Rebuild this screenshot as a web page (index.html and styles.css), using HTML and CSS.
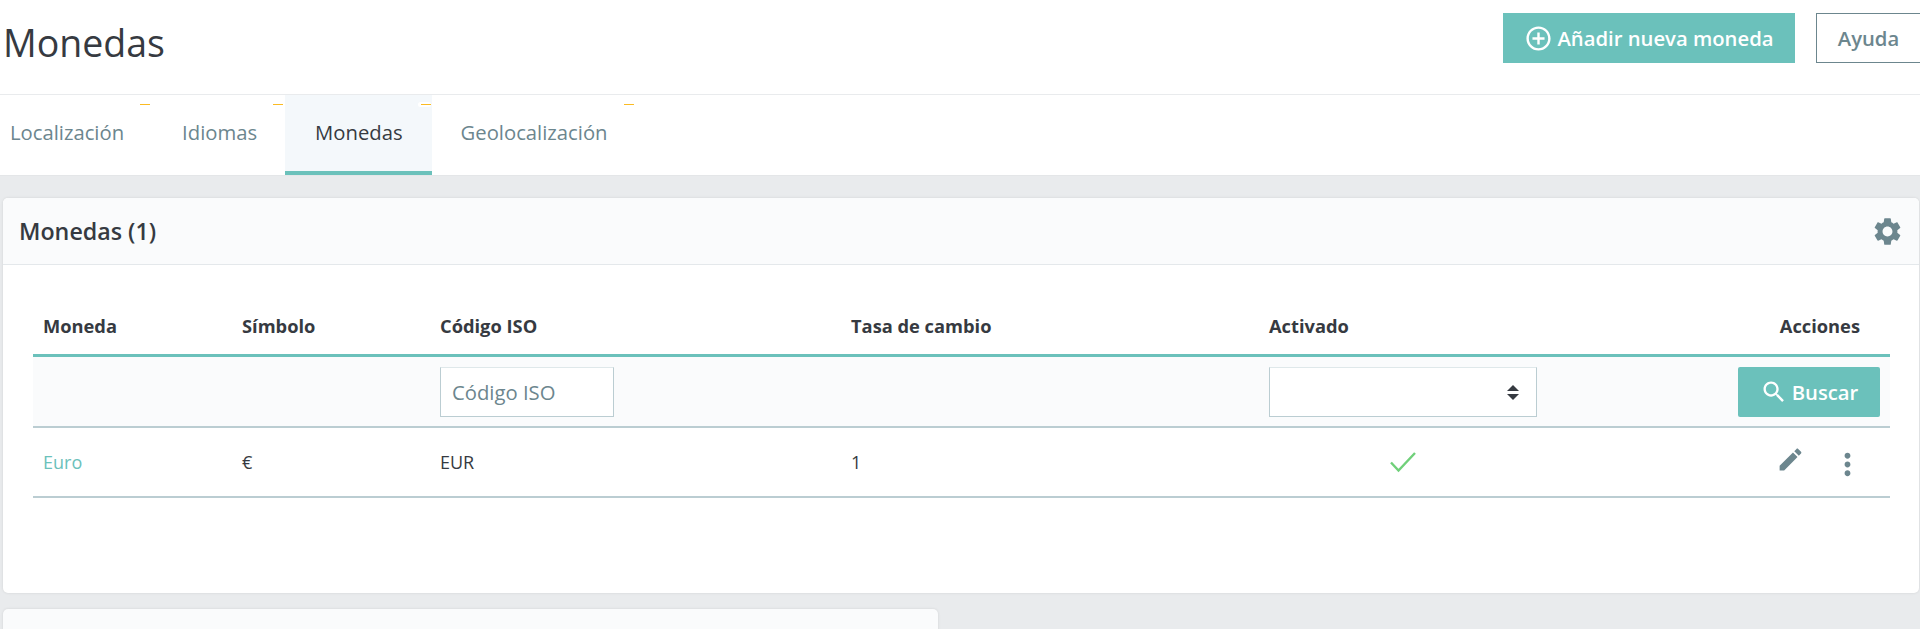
FILE: index.html
```html
<!doctype html>
<html lang="es">
<head>
<meta charset="utf-8">
<meta name="viewport" content="width=device-width, initial-scale=1">
<title>Monedas</title>
<link rel="stylesheet" href="styles.css">
</head>
<body>
<header class="page-head">
  <h1>Monedas</h1>
  <div class="toolbar">
    <a class="btn btn-primary btn-add" href="#">
      <svg class="ico-add" viewBox="0 0 24 24"><path d="M13 7h-2v4H7v2h4v4h2v-4h4v-2h-4V7zm-1-5C6.48 2 2 6.48 2 12s4.48 10 10 10 10-4.48 10-10S17.52 2 12 2zm0 18c-4.41 0-8-3.59-8-8s3.59-8 8-8 8 3.59 8 8-3.59 8-8 8z"/></svg>
      Añadir nueva moneda
    </a>
    <a class="btn btn-help" href="#">Ayuda</a>
  </div>
</header>

<nav class="tabs">
  <a class="tab" href="#">Localización<span class="dash"></span></a>
  <a class="tab" href="#">Idiomas<span class="dash"></span></a>
  <a class="tab active" href="#">Monedas<span class="dash"></span></a>
  <a class="tab" href="#">Geolocalización<span class="dash"></span></a>
</nav>

<main class="content">
  <section class="card">
    <div class="card-head">
      <h2>Monedas (1)</h2>
      <svg class="ico-gear" viewBox="0 0 24 24"><path d="M19.14 12.94c.04-.3.06-.61.06-.94 0-.32-.02-.64-.07-.94l2.03-1.58c.18-.14.23-.41.12-.61l-1.92-3.32c-.12-.22-.37-.29-.59-.22l-2.39.96c-.5-.38-1.03-.7-1.62-.94l-.36-2.54c-.04-.24-.24-.41-.48-.41h-3.84c-.24 0-.43.17-.47.41l-.36 2.54c-.59.24-1.13.57-1.62.94l-2.39-.96c-.22-.08-.47 0-.59.22L2.74 8.87c-.12.21-.08.47.12.61l2.03 1.58c-.05.3-.09.63-.09.94s.02.64.07.94l-2.03 1.58c-.18.14-.23.41-.12.61l1.92 3.32c.12.22.37.29.59.22l2.39-.96c.5.38 1.03.7 1.62.94l.36 2.54c.05.24.24.41.48.41h3.84c.24 0 .44-.17.47-.41l.36-2.54c.59-.24 1.13-.56 1.62-.94l2.39.96c.22.08.47 0 .59-.22l1.92-3.32c.12-.22.07-.47-.12-.61l-2.01-1.58zM12 15.6c-1.98 0-3.6-1.62-3.6-3.6s1.62-3.6 3.6-3.6 3.6 1.62 3.6 3.6-1.62 3.6-3.6 3.6z"/></svg>
    </div>
    <div class="card-body">
      <table class="grid-table">
        <colgroup>
          <col class="col-name"><col class="col-symbol"><col class="col-iso"><col class="col-rate"><col>
        </colgroup>
        <thead>
          <tr class="titles">
            <th>Moneda</th>
            <th>Símbolo</th>
            <th>Código ISO</th>
            <th>Tasa de cambio</th>
            <th>
              <div class="th-split"><span>Activado</span><span class="th-actions">Acciones</span></div>
            </th>
          </tr>
          <tr class="filters">
            <td></td>
            <td></td>
            <td><input class="field field-iso" type="text" placeholder="Código ISO"></td>
            <td></td>
            <td>
              <div class="filter-split">
                <div class="field field-select"><span class="updown"></span></div>
                <a class="btn btn-primary btn-search" href="#">
                  <svg class="ico-search" viewBox="0 0 24 24"><path d="M15.5 14h-.79l-.28-.27C15.41 12.59 16 11.11 16 9.5 16 5.91 13.09 3 9.5 3S3 5.91 3 9.5 5.91 16 9.5 16c1.61 0 3.09-.59 4.23-1.57l.27.28v.79l5 4.99L20.49 19l-4.99-5zm-6 0C7.01 14 5 11.99 5 9.5S7.01 5 9.5 5 14 7.01 14 9.5 11.99 14 9.5 14z"/></svg>
                  Buscar
                </a>
              </div>
            </td>
          </tr>
        </thead>
        <tbody>
          <tr class="row">
            <td><a class="link" href="#">Euro</a></td>
            <td>€</td>
            <td>EUR</td>
            <td>1</td>
            <td>
              <div class="row-split">
                <svg class="ico-check" viewBox="0 0 28 22"><polyline points="2,11.5 9.5,19.5 26,2"/></svg>
                <div class="row-actions">
                  <svg class="ico-edit" viewBox="0 0 24 24"><path d="M3 17.25V21h3.75L17.81 9.94l-3.75-3.75L3 17.25zM20.71 7.04c.39-.39.39-1.02 0-1.41l-2.34-2.34c-.39-.39-1.02-.39-1.41 0l-1.83 1.83 3.75 3.75 1.83-1.83z"/></svg>
                  <svg class="ico-more" viewBox="0 0 24 24"><path d="M12 8c1.1 0 2-.9 2-2s-.9-2-2-2-2 .9-2 2 .9 2 2 2zm0 2c-1.1 0-2 .9-2 2s.9 2 2 2 2-.9 2-2-.9-2-2-2zm0 6c-1.1 0-2 .9-2 2s.9 2 2 2 2-.9 2-2-.9-2-2-2z"/></svg>
                </div>
              </div>
            </td>
          </tr>
        </tbody>
      </table>
    </div>
  </section>

  <section class="card card-next"></section>
</main>
</body>
</html>
```

FILE: styles.css
```css
:root{--teal:#6bc1bb;--ink:#363a41;--slate:#6c868e;--line:#bbcdd2;--pale:#fafbfc;}
html,body{margin:0;padding:0;height:100%;overflow:hidden;}
body{font-family:"Open Sans",Arial,sans-serif;font-size:18px;color:var(--ink);background:#e9ebed;}

/* top bar */
.page-head{
  display:flex;
  align-items:flex-start;
  justify-content:space-between;
  height:94px;
  background:#fff;
  border-bottom:1px solid #e9ebed;
}
h1{
  margin:0;
  padding:17px 0 0 3px;
  font-size:37.5px;
  font-weight:400;
  line-height:52px;
}
.toolbar{display:flex;gap:21px;padding-top:13px;}

.btn{display:flex;align-items:center;justify-content:center;box-sizing:border-box;height:50px;text-decoration:none;font-weight:600;}
.btn-primary{background:var(--teal);color:#fff;}
.btn-add{width:292px;gap:4px;font-size:20.25px;}
.btn-help{width:104px;border:1px solid var(--slate);border-right-width:0;color:var(--slate);background:#fff;font-size:20.25px;}
.ico-add{width:29px;height:29px;fill:#fff;}

/* tabs */
.tabs{
  display:flex;
  height:80px;
  background:#fff;
  border-bottom:1px solid #e4e6e8;
}
.tab{
  position:relative;
  box-sizing:border-box;
  height:80px;
  padding:23px 29px 0 30px;
  font-size:20.25px;
  line-height:28px;
  color:var(--slate);
  text-decoration:none;
}
.tab:first-child{padding:23px 28px 0 10px;}
.tab:nth-child(2){padding-right:28px;}
.tab:last-child{padding-left:29px;}
.tab.active{background:#f4f8fb;color:var(--ink);border-bottom:4px solid var(--teal);}
.dash{
  position:absolute;
  top:7px;
  right:2px;
  width:10px;
  height:5px;
  display:flex;
  align-items:center;
}
.dash::after{content:"";display:block;width:10px;height:1px;background:#fbbb22;}
.tab.active .dash{background:#fff;border-radius:3px;width:13px;right:1px;justify-content:flex-end;}

/* panels */
.content{padding:22px 1px 0 3px;}
.card{background:#fff;border-radius:5px;box-shadow:0 0 3px rgba(0,0,0,.1);}
.card-head{
  display:flex;
  align-items:center;
  justify-content:space-between;
  box-sizing:border-box;
  height:67px;
  padding:0 15px 0 16px;
  background:var(--pale);
  border-bottom:1px solid #e4e8eb;
  border-radius:5px 5px 0 0;
}
h2{margin:0;font-size:23.25px;font-weight:600;line-height:28px;}
.ico-gear{width:33px;height:33px;fill:var(--slate);}
.card-body{padding:31px 29px 95px 30px;}
.card-next{width:935px;height:60px;margin-top:16px;background:var(--pale);}

/* table */
.grid-table{width:100%;table-layout:fixed;border-collapse:separate;border-spacing:0;}
.col-name{width:199px;}
.col-symbol{width:198px;}
.col-iso{width:411px;}
.col-rate{width:418px;}
.grid-table th,.grid-table td{padding:0 10px;text-align:left;}
.titles th{height:61px;font-weight:700;font-size:18.3px;border-bottom:3px solid var(--teal);box-sizing:border-box;}
.filters td{height:71px;box-sizing:border-box;background:var(--pale);border-bottom:2px solid var(--line);}
.row td{height:70px;box-sizing:border-box;border-bottom:2px solid var(--line);}
.link{color:var(--teal);text-decoration:none;}

.th-split,.filter-split,.row-split{display:flex;align-items:center;justify-content:space-between;}
.th-actions{padding-right:20px;}

.field{box-sizing:border-box;height:50px;background:#fff;border:1px solid var(--line);border-top-color:#dfe8ea;}
.field-iso{
  width:174px;
  padding:0 11px;
  font:20.25px "Open Sans",Arial,sans-serif;
  color:var(--ink);
  outline:none;
}
.field-iso::placeholder{color:var(--slate);opacity:1;}
.field-select{position:relative;width:268px;}
.updown{position:absolute;right:17px;top:17px;width:12px;height:15px;}
.updown::before,.updown::after{
  content:"";
  position:absolute;
  left:0;
  border-left:6px solid transparent;
  border-right:6px solid transparent;
}
.updown::before{top:0;border-bottom:6px solid var(--ink);}
.updown::after{bottom:0;border-top:6px solid var(--ink);}

.btn-search{width:142px;gap:4px;border-radius:2px;font-size:20.25px;}
.ico-search{width:28px;height:28px;fill:#fff;}

.ico-check{width:28px;height:22px;margin-left:120px;fill:none;stroke:#70d07a;stroke-width:2.4;}
.row-actions{display:flex;align-items:center;gap:25px;padding-right:15px;}
.ico-edit{width:29px;height:29px;fill:var(--slate);margin-bottom:5px;}
.ico-more{width:35px;height:35px;fill:var(--slate);margin-top:5px;}
```
